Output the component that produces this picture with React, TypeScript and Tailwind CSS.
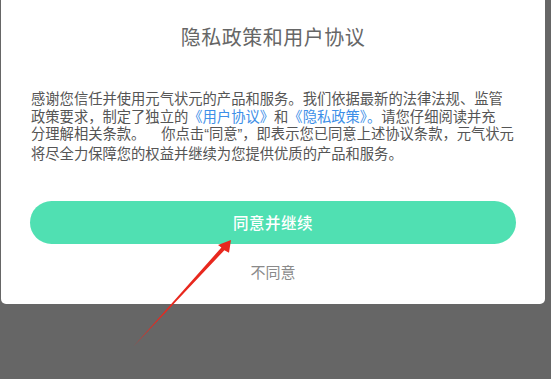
import React from "react";

export default function App() {
  const cjk = { fontFamily: '"Noto Sans CJK SC", "Noto Sans", sans-serif' };
  const latin = { fontFamily: '"Liberation Sans", "Noto Sans", sans-serif' };
  return (
    <div className="relative w-[551px] h-[379px] overflow-hidden bg-[#666666]" style={cjk}>
      <div className="ml-[1px] w-[544px] h-[304px] bg-white rounded-b-[5px] flex flex-col px-[29px]">
        <div className="pt-[23px] h-[51px] text-center text-[20px] leading-[28px] tracking-[0.5px] text-[#666666] font-normal">
          隐私政策和用户协议
        </div>
        <div className="mt-[38px] text-[14.3px] leading-[17.5px] text-[#555555] whitespace-nowrap pl-[1px]">
          <div>感谢您信任并使用元气状元的产品和服务。我们依据最新的法律法规、监管</div>
          <div>
            政策要求，制定了独立的<span className="text-[#3d8fe8]">《用户协议》</span>和
            <span className="text-[#3d8fe8]">《隐私政策》。</span>请您仔细阅读并充
          </div>
          <div>
            分理解相关条款。<span style={latin}>{"\u00a0\u00a0\u00a0\u00a0"}</span>你点击
            <span style={latin}>“</span>同意<span style={latin}>”</span>，即表示您已同意上述协议条款，元气状元
          </div>
          <div>将尽全力保障您的权益并继续为您提供优质的产品和服务。</div>
        </div>
        <button className="mt-[40px] h-[43px] w-full rounded-full bg-[#50e0b2] text-white text-[15.5px] font-medium tracking-[0.5px]">
          同意并继续
        </button>
        <div className="mt-[18px] text-center text-[15px] leading-[20px] text-[#8a8a8a]">不同意</div>
      </div>
      <svg className="absolute left-0 top-0" width="551" height="379" viewBox="0 0 551 379">
        <polygon
          points="133,347 221.4,247.5 218,245 231,240 229,252.7 224.4,250.2"
          fill="#e8281e"
        />
      </svg>
    </div>
  );
}
